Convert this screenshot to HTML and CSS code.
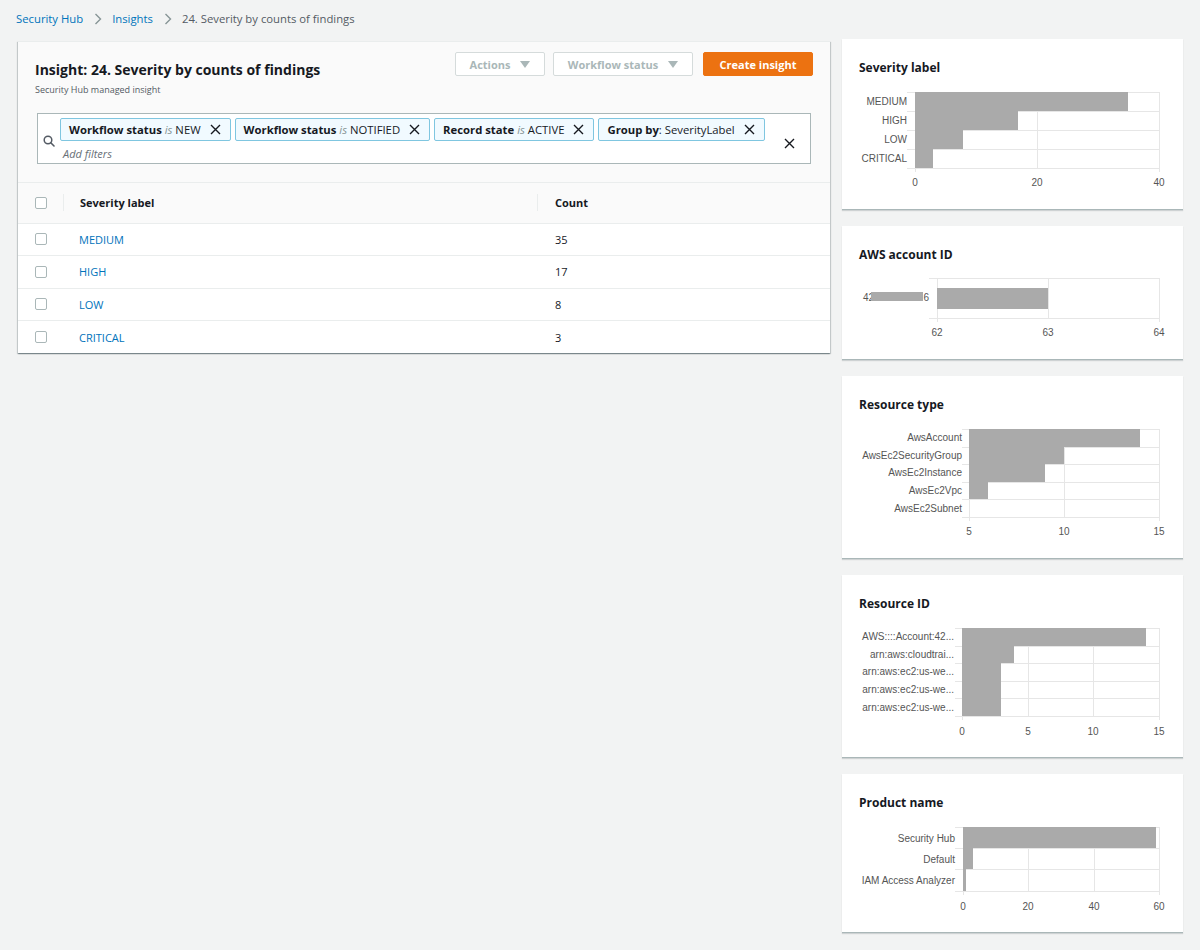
FILE: index.html
```html
<!DOCTYPE html>
<html>
<head>
<meta charset="utf-8">
<link rel="stylesheet" href="styles.css">
</head>
<body>
<div class="page">
  <nav class="crumbs">
    <a class="crumb-link">Security Hub</a>
    <svg class="crumb-sep" width="8" height="12" viewBox="0 0 8 12"><path d="M1.5 1 L6.5 6 L1.5 11" fill="none" stroke="#879596" stroke-width="1.4"/></svg>
    <a class="crumb-link">Insights</a>
    <svg class="crumb-sep" width="8" height="12" viewBox="0 0 8 12"><path d="M1.5 1 L6.5 6 L1.5 11" fill="none" stroke="#879596" stroke-width="1.4"/></svg>
    <span class="crumb-current">24. Severity by counts of findings</span>
  </nav>

  <div class="layout">
    <section class="panel">
      <div class="panel-head">
        <div class="head-row">
          <div class="title-block">
            <h1 class="title">Insight: 24. Severity by counts of findings</h1>
            <div class="subtitle">Security Hub managed insight</div>
          </div>
          <div class="actions">
            <button class="btn btn-disabled btn-actions">Actions <span class="caret"></span></button>
            <button class="btn btn-disabled btn-workflow">Workflow status <span class="caret"></span></button>
            <button class="btn btn-primary">Create insight</button>
          </div>
        </div>
        <div class="filter-box">
          <svg class="search-icon" width="12" height="12" viewBox="0 0 12 12"><circle cx="5" cy="5" r="3.8" fill="none" stroke="#545b64" stroke-width="1.5"/><path d="M7.8 7.8 L11 11" stroke="#545b64" stroke-width="1.6" stroke-linecap="round"/></svg>
          <div class="filter-main">
            <div class="tokens">
              <span class="token"><span class="tok-text"><b>Workflow status</b> <i>is</i> NEW</span><svg class="x" width="11" height="11" viewBox="0 0 11 11"><path d="M1 1 L10 10 M10 1 L1 10" stroke="#16191f" stroke-width="1.4"/></svg></span>
              <span class="token"><span class="tok-text"><b>Workflow status</b> <i>is</i> NOTIFIED</span><svg class="x" width="11" height="11" viewBox="0 0 11 11"><path d="M1 1 L10 10 M10 1 L1 10" stroke="#16191f" stroke-width="1.4"/></svg></span>
              <span class="token"><span class="tok-text"><b>Record state</b> <i>is</i> ACTIVE</span><svg class="x" width="11" height="11" viewBox="0 0 11 11"><path d="M1 1 L10 10 M10 1 L1 10" stroke="#16191f" stroke-width="1.4"/></svg></span>
              <span class="token"><span class="tok-text"><b>Group by</b>: SeverityLabel</span><svg class="x" width="11" height="11" viewBox="0 0 11 11"><path d="M1 1 L10 10 M10 1 L1 10" stroke="#16191f" stroke-width="1.4"/></svg></span>
            </div>
            <div class="add-filters">Add filters</div>
          </div>
          <svg class="clear-x" width="11" height="11" viewBox="0 0 11 11"><path d="M1 1 L10 10 M10 1 L1 10" stroke="#16191f" stroke-width="1.4"/></svg>
        </div>
      </div>
      <table class="grid">
        <thead>
          <tr>
            <th class="c-check"><span class="checkbox"></span></th>
            <th class="c-label"><span class="th-inner">Severity label</span></th>
            <th class="c-count"><span class="th-inner">Count</span></th>
          </tr>
        </thead>
        <tbody>
          <tr><td class="c-check"><span class="checkbox"></span></td><td class="c-label"><a>MEDIUM</a></td><td class="c-count">35</td></tr>
          <tr><td class="c-check"><span class="checkbox"></span></td><td class="c-label"><a>HIGH</a></td><td class="c-count">17</td></tr>
          <tr><td class="c-check"><span class="checkbox"></span></td><td class="c-label"><a>LOW</a></td><td class="c-count">8</td></tr>
          <tr><td class="c-check"><span class="checkbox"></span></td><td class="c-label"><a>CRITICAL</a></td><td class="c-count">3</td></tr>
        </tbody>
      </table>
    </section>

    <aside class="charts">
      <div class="card card-sev">
        <h2 class="card-title">Severity label</h2>
        <svg class="chart" width="310" height="118" viewBox="0 0 310 118">
          <g class="gridlines">
            <line x1="56.5" y1="15" x2="56.5" y2="95"/><line x1="178.5" y1="15" x2="178.5" y2="91"/><line x1="300.5" y1="15" x2="300.5" y2="95"/>
            <line x1="48" y1="15.5" x2="300" y2="15.5"/><line x1="48" y1="34.5" x2="300" y2="34.5"/><line x1="48" y1="53.5" x2="300" y2="53.5"/><line x1="48" y1="72.5" x2="300" y2="72.5"/><line x1="48" y1="91.5" x2="300" y2="91.5"/>
          </g>
          <g class="bars">
            <rect x="56" y="15" width="213" height="19"/>
            <rect x="56" y="34" width="103" height="19"/>
            <rect x="56" y="53" width="48" height="19"/>
            <rect x="56" y="72" width="18" height="19"/>
          </g>
          <g class="ylab">
            <text x="48" y="28">MEDIUM</text><text x="48" y="47">HIGH</text><text x="48" y="66">LOW</text><text x="48" y="85">CRITICAL</text>
          </g>
          <g class="xlab">
            <text x="56" y="109">0</text><text x="178" y="109">20</text><text x="300" y="109">40</text>
          </g>
        </svg>
      </div>

      <div class="card card-acct">
        <h2 class="card-title">AWS account ID</h2>
        <svg class="chart" width="310" height="81" viewBox="0 0 310 81">
          <g class="gridlines">
            <line x1="78.5" y1="14" x2="78.5" y2="58"/><line x1="189.5" y1="14" x2="189.5" y2="54"/><line x1="300.5" y1="14" x2="300.5" y2="58"/>
            <line x1="70" y1="14.5" x2="300" y2="14.5"/><line x1="70" y1="54.5" x2="300" y2="54.5"/>
          </g>
          <g class="bars"><rect x="78" y="24" width="111" height="21"/></g>
          <g class="ylab"><text x="4" y="37" class="start">42</text><text x="70" y="37">6</text></g>
          <rect x="12" y="28" width="52" height="9" fill="#aaaaaa"/>
          <g class="xlab"><text x="78" y="72">62</text><text x="189" y="72">63</text><text x="300" y="72">64</text></g>
        </svg>
      </div>

      <div class="card card-type">
        <h2 class="card-title">Resource type</h2>
        <svg class="chart" width="310" height="130" viewBox="0 0 310 130">
          <g class="gridlines">
            <line x1="110.5" y1="15" x2="110.5" y2="107"/><line x1="205.5" y1="15" x2="205.5" y2="103"/><line x1="300.5" y1="15" x2="300.5" y2="107"/>
            <line x1="103" y1="15.5" x2="300" y2="15.5"/><line x1="103" y1="33.5" x2="300" y2="33.5"/><line x1="103" y1="50.5" x2="300" y2="50.5"/><line x1="103" y1="68.5" x2="300" y2="68.5"/><line x1="103" y1="85.5" x2="300" y2="85.5"/><line x1="103" y1="103.5" x2="300" y2="103.5"/>
          </g>
          <g class="bars">
            <rect x="110" y="15" width="171" height="18"/>
            <rect x="110" y="33" width="95" height="17"/>
            <rect x="110" y="50" width="76" height="18"/>
            <rect x="110" y="68" width="19" height="17"/>
          </g>
          <g class="ylab">
            <text x="103" y="27">AwsAccount</text><text x="103" y="45">AwsEc2SecurityGroup</text><text x="103" y="62">AwsEc2Instance</text><text x="103" y="80">AwsEc2Vpc</text><text x="103" y="98">AwsEc2Subnet</text>
          </g>
          <g class="xlab"><text x="110" y="121">5</text><text x="205" y="121">10</text><text x="300" y="121">15</text></g>
        </svg>
      </div>

      <div class="card card-rid">
        <h2 class="card-title">Resource ID</h2>
        <svg class="chart" width="310" height="130" viewBox="0 0 310 130">
          <g class="gridlines">
            <line x1="103.5" y1="15" x2="103.5" y2="107"/><line x1="169.5" y1="15" x2="169.5" y2="103"/><line x1="234.5" y1="15" x2="234.5" y2="103"/><line x1="300.5" y1="15" x2="300.5" y2="107"/>
            <line x1="96" y1="15.5" x2="300" y2="15.5"/><line x1="96" y1="33.5" x2="300" y2="33.5"/><line x1="96" y1="50.5" x2="300" y2="50.5"/><line x1="96" y1="68.5" x2="300" y2="68.5"/><line x1="96" y1="85.5" x2="300" y2="85.5"/><line x1="96" y1="103.5" x2="300" y2="103.5"/>
          </g>
          <g class="bars">
            <rect x="103" y="15" width="184" height="18"/>
            <rect x="103" y="33" width="52" height="17"/>
            <rect x="103" y="50" width="39" height="53"/>
          </g>
          <g class="ylab">
            <text x="95" y="27">AWS::::Account:42...</text><text x="95" y="45">arn:aws:cloudtrai...</text><text x="95" y="62">arn:aws:ec2:us-we...</text><text x="95" y="80">arn:aws:ec2:us-we...</text><text x="95" y="98">arn:aws:ec2:us-we...</text>
          </g>
          <g class="xlab"><text x="103" y="122">0</text><text x="169" y="122">5</text><text x="234" y="122">10</text><text x="300" y="122">15</text></g>
        </svg>
      </div>

      <div class="card card-prod">
        <h2 class="card-title">Product name</h2>
        <svg class="chart" width="310" height="106" viewBox="0 0 310 106">
          <g class="gridlines">
            <line x1="104.5" y1="15" x2="104.5" y2="83"/><line x1="169.5" y1="15" x2="169.5" y2="79"/><line x1="235.5" y1="15" x2="235.5" y2="79"/><line x1="300.5" y1="15" x2="300.5" y2="83"/>
            <line x1="96" y1="15.5" x2="300" y2="15.5"/><line x1="96" y1="36.5" x2="300" y2="36.5"/><line x1="96" y1="57.5" x2="300" y2="57.5"/><line x1="96" y1="79.5" x2="300" y2="79.5"/>
          </g>
          <g class="bars">
            <rect x="104" y="15" width="193" height="21"/>
            <rect x="104" y="36" width="10" height="21"/>
            <rect x="104" y="57" width="3" height="22"/>
          </g>
          <g class="ylab">
            <text x="96" y="30">Security Hub</text><text x="96" y="51">Default</text><text x="96" y="72">IAM Access Analyzer</text>
          </g>
          <g class="xlab"><text x="104" y="98">0</text><text x="169" y="98">20</text><text x="235" y="98">40</text><text x="300" y="98">60</text></g>
        </svg>
      </div>
    </aside>
  </div>
</div>
</body>
</html>
```

FILE: styles.css
```css
* { box-sizing: border-box; }
html, body { margin: 0; padding: 0; }
body {
  background: #f2f3f3;
  font-family: "Open Sans", "Noto Sans", sans-serif;
  color: #16191f;
  width: 1200px;
  height: 950px;
  overflow: hidden;
}
.page { padding: 11px 17px 0 18px; }

.crumbs {
  display: flex;
  align-items: center;
  height: 16px;
  margin-left: -2px;
  margin-bottom: 14px;
  font-size: 11.3px;
  line-height: 16px;
}
.crumb-link { color: #0073bb; }
.crumb-sep { margin: 0 10px 0 11px; }
.crumb-current { color: #545b64; }

.layout {
  display: flex;
  align-items: flex-start;
  gap: 12px;
}

.panel {
  width: 812px;
  flex: none;
  background: #fff;
  box-shadow: 0 1px 1px 0 rgba(0,28,36,.3), 1px 1px 1px 0 rgba(0,28,36,.15), -1px 1px 1px 0 rgba(0,28,36,.15);
  border-top: 1px solid #eaeded;
}
.panel-head {
  background: #fafafa;
  padding: 11px 17px 18px 17px;
  border-bottom: 1px solid #eaeded;
}
.head-row {
  display: flex;
  justify-content: space-between;
  align-items: flex-start;
}
.title {
  margin: 7px 0 0 0;
  font-size: 14px;
  line-height: 20px;
  font-weight: 700;
}
.subtitle {
  margin-top: 3px;
  font-size: 9px;
  line-height: 14px;
  color: #545b64;
}
.actions {
  display: flex;
  margin-top: -1px;
}
.btn {
  height: 24px;
  font-family: inherit;
  font-size: 11px;
  font-weight: 700;
  border-radius: 2px;
  padding: 0;
  display: flex;
  align-items: center;
  justify-content: center;
  gap: 10px;
  white-space: nowrap;
}
.btn-disabled {
  background: #fff;
  border: 1px solid #d5dbdb;
  color: #aab7b8;
}
.btn-actions { width: 90px; }
.btn-workflow { width: 140px; margin-left: 8px; }
.btn-primary {
  background: #ec7211;
  border: 1px solid #ec7211;
  color: #fff;
  width: 110px;
  margin-left: 10px;
}
.caret {
  width: 0; height: 0;
  border-left: 5px solid transparent;
  border-right: 5px solid transparent;
  border-top: 7px solid #aab7b8;
}

.filter-box {
  margin: 16px 2px 0 2px;
  height: 51px;
  border: 1px solid #aab7b8;
  background: #fff;
  display: flex;
  align-items: flex-start;
  padding: 4px 0 0 5px;
}
.search-icon { margin-top: 17px; flex: none; }
.filter-main { margin-left: 5px; flex: 1; }
.tokens { display: flex; gap: 4px; }
.token {
  height: 23px;
  display: flex;
  align-items: center;
  background: #f1faff;
  border: 1px solid #7fc6e0;
  border-radius: 2px;
  padding: 0 9px 0 8px;
  font-size: 11.3px;
}
.tok-text { white-space: pre; }
.token b { font-weight: 700; }
.token i { color: #879596; }
.token .x { margin-left: 9px; }
.add-filters {
  font-style: italic;
  color: #687078;
  font-size: 11px;
  line-height: 14px;
  margin-top: 6px;
  margin-left: 3px;
}
.clear-x { margin: 20px 15px 0 0; flex: none; }

.grid {
  width: 100%;
  border-collapse: collapse;
  font-size: 11px;
}
.grid th {
  height: 40px;
  background: #fafafa;
  text-align: left;
  font-weight: 700;
  padding: 0;
  border-bottom: 1px solid #eaeded;
}
.grid td {
  height: 32.5px;
  padding: 0;
  border-top: 1px solid #eaeded;
}
.grid tbody tr:first-child td { border-top: none; }
.c-check { width: 45px; padding-left: 17px !important; }
.c-label { width: 474px; }
.th-inner {
  display: block;
  border-left: 1px solid #eaeded;
  padding-left: 16px;
  line-height: 17px;
}
.c-count .th-inner { padding-left: 17px; }
td.c-label { padding-left: 16px !important; }
td.c-count { padding-left: 18px !important; }
.grid a { color: #0073bb; }
.checkbox {
  display: block;
  width: 12px;
  height: 12px;
  border: 1px solid #aab7b8;
  border-radius: 2px;
  background: #fff;
}

.charts {
  width: 341px;
  flex: none;
  display: flex;
  flex-direction: column;
  gap: 16px;
}
.card {
  background: #fff;
  padding: 19px 14px 13px 17px;
  border-bottom: 1px solid #aab7b8;
  box-shadow: 0 1px 1px 0 rgba(0,28,36,.15);
}
.card-sev { margin-top: -2px; }
.card-title {
  margin: 0;
  font-size: 12px;
  line-height: 20px;
  font-weight: 700;
}
.chart { display: block; overflow: visible; margin-top: -1px; margin-bottom: 1px; }
.gridlines line { stroke: #e6e6e6; stroke-width: 1; }
.bars rect { fill: #aaaaaa; }
.ylab text {
  font-family: "Liberation Sans", Arial, sans-serif;
  font-size: 10px;
  fill: #555;
  text-anchor: end;
}
.ylab text.start { text-anchor: start; }
.xlab text {
  font-family: "Liberation Sans", Arial, sans-serif;
  font-size: 10px;
  fill: #555;
  text-anchor: middle;
}
```
